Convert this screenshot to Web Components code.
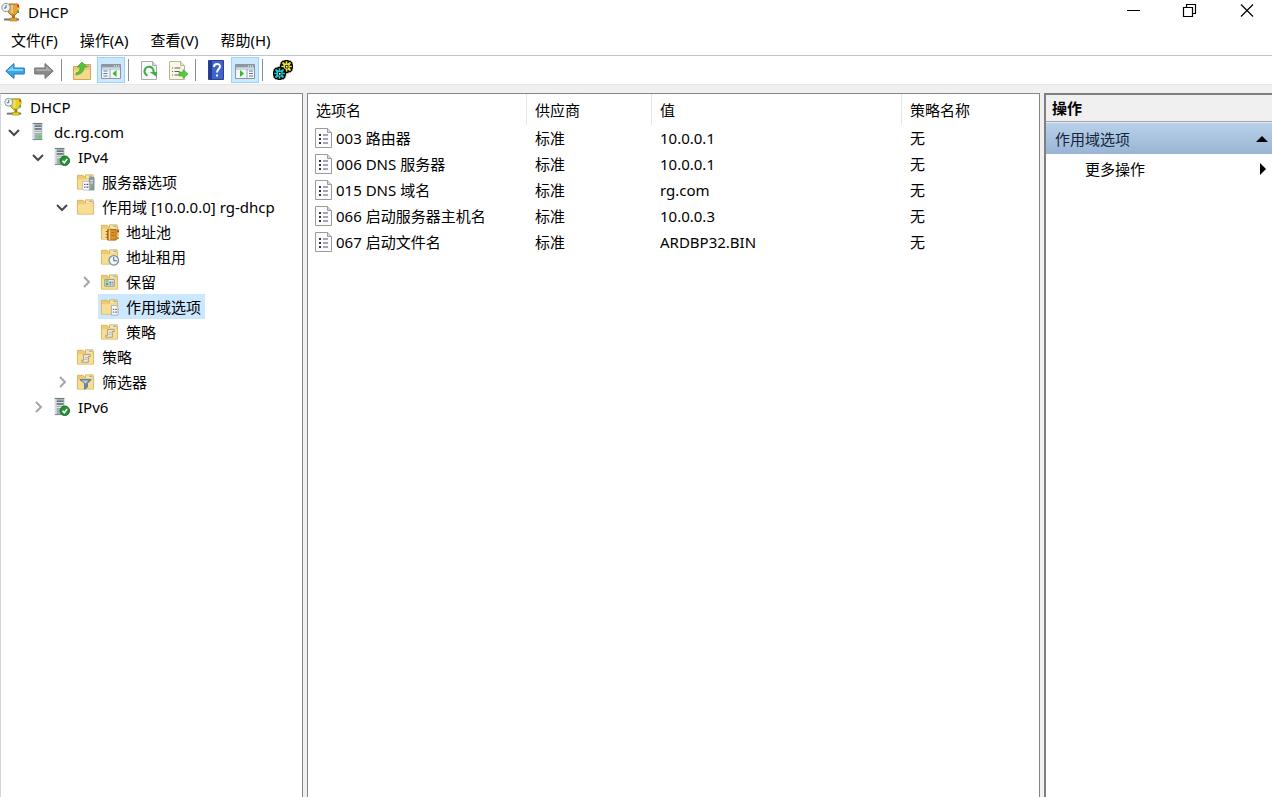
<!DOCTYPE html>
<html lang="zh-CN">
<head>
<meta charset="utf-8">
<title>DHCP</title>
<style>
  body {
    margin: 0;
    background: #fff;
    color: #000;
    font: 15px/20px "Noto Sans", "Noto Sans CJK SC", sans-serif;
  }
</style>
</head>
<body>
<dhcp-console></dhcp-console>

<script>
const folder = `
  <path d="M1.5 3.5h6l1.5 1.500h9.500v13h-17z" fill="#eccb73" stroke="#d9b35e"/>
  <path d="M10 3h8v4h-8z" fill="#f6e6ad" stroke="#d8b45c"/><path d="M14 4h3v1h-3z" fill="#5da9dd"/>
  <path d="M2 7.500h7l1.500-1H18V17.500H2z" fill="#f8de94"/>`;
const server = `
  <path d="M5 1h10v18H5z" fill="#a3b0b6"/><path d="M5 1h2v18H5z" fill="#d5dcdf"/>
  <path d="M5 1h10v1H5z" fill="#6b777c"/>
  <path d="M7 4.500h7M7 7.500h7" stroke="#45555b" stroke-width="1.200"/><path d="M7 5.700h7M7 8.700h7M7 11h7" stroke="#e5eaec"/>
  <path d="M11 15h3v2h-3z" fill="#4be01e"/><path d="M5 18.500h10" stroke="#7b878c"/>`;
const serverOk = `
  <g transform="translate(-2 0)">${server}</g>
  <circle cx="13.500" cy="14.500" r="5" fill="#249334" stroke="#147022"/>
  <path d="M11 14.500l2 2 3-4" fill="none" stroke="#fff" stroke-width="1.700"/>`;
const scroll = `<path d="M8 8h7v2h-2v6H6v-2h2z" fill="#f1edde" stroke="#a39b7c"/><path d="M9.500 11h3M9 13h3" stroke="#b9b298"/>`;
const trophy = (body, dark) => `
  <path d="M8 2h9l1 4-1 4-3 3h-4L7 10z" fill="${body}" stroke="${dark}"/>
  <path d="M10 3h2v8h-2z" fill="#fff" opacity=".4"/>
  <path d="M11 13h3v4h-3z" fill="${dark}"/><path d="M3 17.500h15" stroke="#77746a" stroke-width="2"/>
  <path d="M9 16h7v3H9z" fill="${body}" stroke="${dark}" stroke-width=".6"/>
  <path d="M16 3h2v2h-2z" fill="#e33b25"/><path d="M16 6h2v2h-2z" fill="#eec52e"/><path d="M16 9h2v2h-2z" fill="#43a844"/>
  <circle cx="5" cy="5.500" r="4.200" fill="#edf3f5" stroke="#83959e"/><path d="M5 3v3H3" fill="none" stroke="#536a78"/>`;
const panel = `
  <path d="M.5 4.500h19v14H.5z" fill="#f4f5f6" stroke="#8a95a0"/><path d="M1 5h18v2.500H1z" fill="#8d99a6"/>
  <path d="M13 6h1M15 6h1M17 6h1" stroke="#fff"/><path d="M1 9h18" stroke="#aeb6bd"/>`;
const gear = `<path d="M-1.500-6h3v2l2-1.500 2 2-1.500 2h2v3h-2l1.500 2-2 2-2-1.500v2h-3v-2l-2 1.500-2-2 1.500-2h-2v-3h2l-1.500-2 2-2 2 1.500z" stroke="#000" stroke-width="1.300"/><path d="M-1-1h2.500v2.500H-1z" fill="#fff" stroke="#000" stroke-width=".8"/>`;
const icons = {
  app: trophy('#e2a13a', '#ad711b'),
  dhcp: trophy('#e3d321', '#928810'),
  server, serverOk, folder,
  serverOptions: folder + `
    <path d="M14 6h5v13h-5z" fill="#929fa6" stroke="#6c7880" stroke-width=".7"/><path d="M15 9h3M15 11.500h3" stroke="#e9eeee"/>
    <path d="M17 15h1v2h-1z" fill="#38d61b"/><path d="M7 10h7v9H7z" fill="#fff" stroke="#a4a7b8" stroke-width=".7"/>
    <path d="M8.500 13h1.500M11 13h2M8.500 16h1.500M11 16h2" stroke="#55577c" stroke-width="1.300"/>`,
  pool: folder + `
    <path d="M8 8h9v11H8z" fill="#dd942e" stroke="#a36315"/><path d="M10 8v11" stroke="#ffd183"/>
    <path d="M6 10h3M6 13h3M6 16h3" stroke="#81633b"/><path d="M12 11h3M12 14h3" stroke="#a96816"/>
    <path d="M18 8h2v3h-2z" fill="#e33b25"/><path d="M18 12h2v3h-2z" fill="#efce36"/><path d="M18 16h2v2h-2z" fill="#5bb14e"/>`,
  lease: folder + `<circle cx="14.500" cy="14" r="5" fill="#eef5f8" stroke="#788d9b" stroke-width="1.300"/><path d="M14.500 10.500V14.500H18" fill="none" stroke="#46637c"/>`,
  reserve: folder + `<path d="M5 8h10v7H5z" fill="#eef3ed" stroke="#8a9890"/><path d="M6 11h3v3H6z" fill="#43b75c"/><path d="M10 10h2v2h-2zM13 10h1v2h-1zM10 13h2v1h-2zM13 13h1v1h-1zM6 9h3v1H6z" fill="#5b718c"/>`,
  options: folder + `<path d="M12 9h5l2 2v8h-7z" fill="#fbfbfe" stroke="#989daf" stroke-width=".8"/><path d="M13.500 13h1.500M16 13h2M13.500 16h1.500M16 16h2" stroke="#65698b" stroke-width="1.300"/>`,
  policy: folder + scroll,
  filter: folder + `<path d="M4 8h12l-4 4v4l-3 2v-6z" fill="#6b8ca8" stroke="#5b7a94"/><path d="M6 9h7l-3 3z" fill="#bad0dd"/>`,
  page: `<path d="M1.500.5h12l4 4v15h-16z" fill="#fbfbfb" stroke="#9b9b9b"/><path d="M13.500.5v4h4" fill="#d8d8d8" stroke="#9b9b9b"/>
    <path d="M5 6h2v2H5zM5 10h2v2H5zM5 14h2v2H5z" fill="#34343e"/><path d="M9 7h5M9 11h5M9 15h5" stroke="#8a87a9" stroke-width="1.300"/>`,
  back: `<path d="M.8 11L9 3.500V8h10.300v6H9v4.500z" fill="#38a8e8" stroke="#2479b7"/><path d="M3 10l5-4v3h10v2H3z" fill="#7cd0fa"/>`,
  forward: `<path d="M19.200 11L11 3.500V8H.7v6H11v4.500z" fill="#8a8a8a" stroke="#747474"/><path d="M17 10l-5-4v3H2v2h15z" fill="#aaa"/>`,
  up: `<path d="M1.500 6.500h7l2-2h8v15h-17z" fill="#efc970" stroke="#cfa75b"/><path d="M2 10h16v9H2z" fill="#f6d98a"/><path d="M14 6h3v1h-3z" fill="#5da9dd"/>
    <path d="M4 13c3-1 4-2 4-6H5l5-5 5 5h-3c0 5-3 7-8 8z" fill="#58c33a" stroke="#48a936" stroke-width=".8"/>`,
  tree: panel + `<path d="M2.500 11h4M2.500 13.500h4M2.500 16h4" stroke="#527db8"/><path d="M9 9v9" stroke="#9aa5ae"/><path d="M15.500 10v7l-4-3.500z" fill="#35b735"/>`,
  actions: panel + `<path d="M14 11h4M14 13.500h4M14 16h4" stroke="#527db8"/><path d="M12 9v9" stroke="#9aa5ae"/><path d="M5 10v7l4-3.500z" fill="#35b735"/>`,
  refresh: `<path d="M2.500 1.500h11l4 4v14h-15z" fill="#fafafa" stroke="#aaa"/><path d="M13.500 1.500v4h4" fill="#ddd" stroke="#aaa"/>
    <path d="M8.500 15.500A4.500 4.500 0 1 1 14.500 12" fill="none" stroke="#3faf4b" stroke-width="2.200"/><path d="M10.500 12h7.500v5z" fill="#3faf4b"/>`,
  export: `<path d="M1.500 1.500h11l4 4v14h-15z" fill="#fcf8df" stroke="#b9b59d"/><path d="M12.500 1.500v4h4" fill="#e8e3c8" stroke="#b9b59d"/>
    <path d="M4 8h1M6.500 8h6M4 11.500h1M6.500 11.500h5M4 15h1M6.500 15h6" stroke="#5e607b"/><path d="M11 12h4V9.500l5 4.500-5 4.500V16h-4z" fill="#59ca3d" stroke="#3ca72b" stroke-width=".6"/>`,
  help: `<path d="M2.500.5h15v19h-15z" fill="#3f64cd" stroke="#28419a"/><path d="M3 1h3v18H3z" fill="#233c93"/>
    <path d="M8 7c0-4 6-4 6-.5 0 2.500-3 2.500-3 6" fill="none" stroke="#fff" stroke-width="2"/><path d="M10 14.500h2v2h-2z" fill="#fff"/>`,
  gears: `<g transform="translate(13.500 6.500)" fill="#f2df22">${gear}</g><g transform="translate(6.500 13.500)" fill="#20c5c9">${gear}</g>`,
  minimize: `<path d="M4 10.500h13" stroke="#000"/>`,
  restore: `<path d="M3.500 7.500h9v9h-9zM6.500 7v-2.500h9v9H13" fill="none" stroke="#000" stroke-width="1.200"/>`,
  close: `<path d="M4 4.500l12 12M16 4.500l-12 12" stroke="#000" stroke-width="1.200"/>`,
  open: `<path d="M5 8l5 5 5-5" fill="none" stroke="#484848" stroke-width="2"/>`,
  closed: `<path d="M8 5l5 5-5 5" fill="none" stroke="#a6a6a6" stroke-width="2"/>`,
  triUp: `<path d="M4 13l6-6 6 6z" fill="#000"/>`,
  triRight: `<path d="M8 4l6 6-6 6z" fill="#000"/>`
};

const define = (name, render) => customElements.define(name, class extends HTMLElement {
  connectedCallback() {
    if (!this.shadowRoot) this.attachShadow({ mode: 'open' }).innerHTML = render(this);
  }
});
const buttonReset = `button { margin: 0; padding: 0; border: 0; background: none; color: inherit; font: inherit; }`;

define('ui-icon', el => `
  <style>
    :host { display: block; flex: none; width: 20px; height: 20px; }
    svg { display: block; width: 100%; height: 100%; }
  </style>
  <svg viewBox="0 0 20 20" aria-hidden="true">${icons[el.getAttribute('name')]}</svg>`);

define('title-bar', () => `
  <style>
    :host { display: flex; align-items: center; height: 24px; padding-left: 1px; }
    ${buttonReset}
    h1 { flex: 1; margin: 0 0 0 7px; font: inherit; }
    div { display: flex; gap: 7px; align-self: flex-start; }
    button { display: grid; place-items: center; width: 50px; height: 20px; }
  </style>
  <ui-icon name="app"></ui-icon><h1><slot></slot></h1>
  <div>
    <button aria-label="最小化"><ui-icon name="minimize"></ui-icon></button>
    <button aria-label="还原"><ui-icon name="restore"></ui-icon></button>
    <button aria-label="关闭"><ui-icon name="close"></ui-icon></button>
  </div>`);

define('menu-bar', () => `
  <style>
    :host { display: flex; height: 31px; border-bottom: 1px solid #c3c3c8; }
    ${buttonReset}
    button { padding: 0 11px; }
  </style>
  ${['文件(F)', '操作(A)', '查看(V)', '帮助(H)'].map(t => `<button>${t}</button>`).join('')}`);

define('tool-bar', () => `
  <style>
    :host { display: flex; align-items: center; gap: 1px; height: 28px; padding-left: 1px; }
    ${buttonReset}
    button { display: grid; place-items: center; width: 28px; height: 26px; }
    button[aria-pressed] { background: #cce8ff; box-shadow: inset 0 0 0 1px #99d1ff; }
    i { width: 1px; height: 22px; margin: 0 5px 0 2px; background: #8d8d8d; }
  </style>
  ${[['back', '后退'], ['forward', '前进'], 0, ['up', '向上'], ['tree', '控制台树', 1], 0, ['refresh', '刷新'],
     ['export', '导出列表'], 0, ['help', '帮助'], ['actions', '操作窗格', 1], 0, ['gears', '配置']]
    .map(b => b ? `<button aria-label="${b[1]}"${b[2] ? ' aria-pressed="true"' : ''}><ui-icon name="${b[0]}"></ui-icon></button>` : '<i></i>').join('')}`);

define('tree-node', el => {
  const state = el.getAttribute('state');
  return `
  <style>
    :host { display: block; }
    ${buttonReset}
    .row { display: flex; height: 25px; }
    .toggle { display: grid; place-items: center; width: 24px; }
    .item { display: flex; align-items: center; gap: 7px; padding: 0 4px 0 2px; white-space: nowrap; }
    .item ui-icon { width: 19px; height: 19px; }
    :host([selected]) .item { background: #cce8ff; }
    .children { margin-left: 24px; }
    :host([root]) .children { margin-left: 0; }
    :host([root]) .toggle { display: none; }
  </style>
  <div class="row">
    ${state ? `<button class="toggle" aria-label="展开或折叠"><ui-icon name="${state}"></ui-icon></button>` : '<span class="toggle"></span>'}
    <button class="item"><ui-icon name="${el.getAttribute('icon')}"></ui-icon><span>${el.getAttribute('label')}</span></button>
  </div>
  <div class="children"><slot></slot></div>`;
});

define('console-tree', () => `
  <style>
    :host { display: block; box-sizing: border-box; padding: 0 0 0 1px; background: #fff; border: 1px solid #828790; border-width: 1px 1px 0; border-left-color: #d4d4dc; }
  </style>
  <tree-node root icon="dhcp" label="DHCP">
    <tree-node state="open" icon="server" label="dc.rg.com">
      <tree-node state="open" icon="serverOk" label="IPv4">
        <tree-node icon="serverOptions" label="服务器选项"></tree-node>
        <tree-node state="open" icon="folder" label="作用域 [10.0.0.0] rg-dhcp">
          <tree-node icon="pool" label="地址池"></tree-node>
          <tree-node icon="lease" label="地址租用"></tree-node>
          <tree-node state="closed" icon="reserve" label="保留"></tree-node>
          <tree-node selected icon="options" label="作用域选项"></tree-node>
          <tree-node icon="policy" label="策略"></tree-node>
        </tree-node>
        <tree-node icon="policy" label="策略"></tree-node>
        <tree-node state="closed" icon="filter" label="筛选器"></tree-node>
      </tree-node>
      <tree-node state="closed" icon="serverOk" label="IPv6"></tree-node>
    </tree-node>
  </tree-node>`);

define('option-list', () => `
  <style>
    :host { display: block; box-sizing: border-box; background: #fff; border: 1px solid #828790; border-bottom: 0; }
    table { width: 100%; table-layout: fixed; border-collapse: separate; border-spacing: 0; }
    th, td { padding: 0 0 0 8px; text-align: left; font-weight: normal; white-space: nowrap; }
    th { height: 31px; background: linear-gradient(#e5e5e5, #e5e5e5) right / 1px 100% no-repeat; }
    th:last-child { background: none; }
    td { height: 26px; }
    .name { display: flex; align-items: center; gap: 2px; margin-left: -2px; }
    .c1 { width: 219px; } .c2 { width: 125px; } .c3 { width: 250px; }
  </style>
  <table>
    <colgroup><col class="c1"><col class="c2"><col class="c3"><col></colgroup>
    <thead><tr><th>选项名</th><th>供应商</th><th>值</th><th>策略名称</th></tr></thead>
    <tbody>
    ${[['003 路由器', '10.0.0.1'], ['006 DNS 服务器', '10.0.0.1'], ['015 DNS 域名', 'rg.com'],
       ['066 启动服务器主机名', '10.0.0.3'], ['067 启动文件名', 'ARDBP32.BIN']]
      .map(([name, value]) => `<tr><td><div class="name"><ui-icon name="page"></ui-icon>${name}</div></td><td>标准</td><td>${value}</td><td>无</td></tr>`).join('')}
    </tbody>
  </table>`);

define('actions-pane', () => `
  <style>
    :host { display: block; box-sizing: border-box; background: #fff; border: solid #7f7f7f; border-width: 2px 0 0 2px; }
    ${buttonReset}
    h2 { margin: 0; padding: 0 6px; font: inherit; font-weight: bold; line-height: 26px; background: #f0f0f0; border-bottom: 1px solid #a6a6a6; }
    button { display: flex; align-items: center; justify-content: space-between; width: 100%; height: 30px; }
    .group { height: 32px; padding-left: 9px; color: #15253c; background: linear-gradient(#b9d1ea, #99b4d4); border-top: 1px solid #e3e9ef; }
    .more { padding-left: 39px; }
  </style>
  <h2>操作</h2>
  <button class="group">作用域选项<ui-icon name="triUp"></ui-icon></button>
  <button class="more">更多操作<ui-icon name="triRight"></ui-icon></button>`);

define('dhcp-console', () => `
  <style>
    :host { display: flex; flex-direction: column; min-height: 100vh; }
    main { flex: 1; display: grid; grid-template-columns: 303px minmax(0, 1fr) 228px; gap: 4px; padding-top: 8px; background: #f0f0f0; border-top: 1px solid #e6e6e6; }
  </style>
  <title-bar>DHCP</title-bar>
  <menu-bar></menu-bar>
  <tool-bar></tool-bar>
  <main><console-tree></console-tree><option-list></option-list><actions-pane></actions-pane></main>`);
</script>
</body>
</html>
